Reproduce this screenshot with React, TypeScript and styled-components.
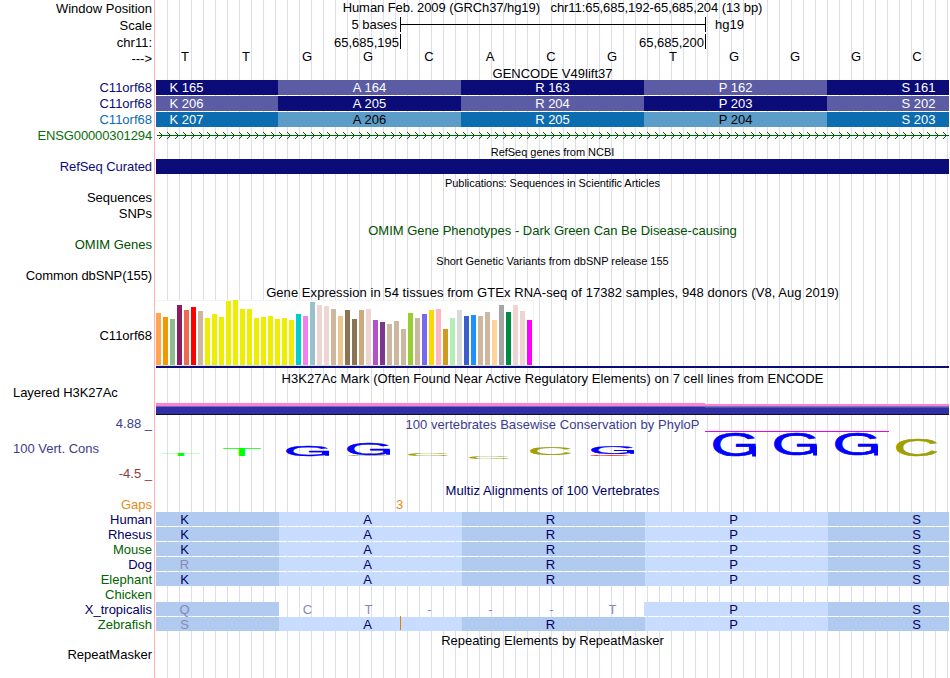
import React, { FunctionComponent, ReactNode } from "react";
import styled, { createGlobalStyle } from "styled-components";

const GlobalStyle = createGlobalStyle`
  body {
    margin: 0;
    background: #ffffff;
  }
`;

const Browser = styled.div`
  display: flex;
  flex-direction: column;
  width: 950px;
  height: 678px;
  overflow: hidden;
  font-family: "Liberation Sans", Arial, sans-serif;
  font-size: 13px;
  line-height: 15px;
  color: #000000;
  white-space: pre;
  background:
    linear-gradient(#ffb4b4, #ffb4b4) 154px 0 / 1px 100% no-repeat,
    repeating-linear-gradient(
        90deg,
        transparent 0 11px,
        #dcdcf8 11px 12px
      )
      156px 0 / 793px 100% no-repeat;
`;

const TrackRow = styled.div<{ $height: number }>`
  display: flex;
  flex: none;
  height: ${(props) => props.$height}px;
`;

const Side = styled.div`
  display: flex;
  flex-direction: column;
  flex: none;
  width: 156px;
`;

const Label = styled.div<{
  $top: number;
  $color?: string;
  $left?: boolean;
  $spacing?: number;
}>`
  padding: ${(props) => props.$top}px 4px 0 13px;
  text-align: ${(props) => (props.$left ? "left" : "right")};
  color: ${(props) => props.$color || "#000000"};
  letter-spacing: ${(props) => props.$spacing || 0}px;
`;

const Lane = styled.div`
  width: 793px;
  flex: none;
  overflow-x: clip;
  overflow-y: visible;
`;

const Title = styled.div<{
  $top: number;
  $color?: string;
  $small?: boolean;
  $spacing?: number;
}>`
  padding-top: ${(props) => props.$top}px;
  text-align: center;
  font-size: ${(props) => (props.$small ? 11 : 13)}px;
  color: ${(props) => props.$color || "#000000"};
  letter-spacing: ${(props) => props.$spacing || 0}px;
`;

const RulerLine = styled.div`
  display: flex;
`;

const RulerText = styled.div<{ $width: number; $gap?: number; $top?: number }>`
  box-sizing: border-box;
  width: ${(props) => props.$width}px;
  padding-top: ${(props) => props.$top || 0}px;
  padding-right: ${(props) => props.$gap || 0}px;
  text-align: right;
`;

const ScaleBar = styled.div`
  display: flex;
  align-items: center;
  width: 304px;
  height: 15px;
  border: solid #000000;
  border-width: 0 1px;

  &::before {
    content: "";
    width: 100%;
    height: 1px;
    background: #000000;
  }
`;

const ScaleName = styled.div`
  padding-left: 9px;
`;

const Tick = styled.div`
  width: 1px;
  height: 15px;
  background: #000000;
`;

const BaseRow = styled.div`
  display: grid;
  grid-template-columns: repeat(13, 61px);
  margin: -1px 0 0 -1.5px;
  width: 794px;
  text-align: center;
`;

// The first codon starts one base before the window
const CodonRow = styled.div`
  display: grid;
  grid-template-columns: repeat(5, 183px);
  margin-left: -61px;
  width: 915px;
`;

const Codon = styled.div<{ $fill: string; $color: string }>`
  height: 15px;
  text-align: center;
  background: ${(props) => props.$fill};
  color: ${(props) => props.$color};
`;

const SolidBar = styled.div`
  height: 15px;
  background: #0c0c78;
`;

const Expression = styled.div`
  display: flex;
  align-items: flex-end;
  gap: 2px;
  box-sizing: border-box;
  width: 378px;
  height: 66px;
  background: #ffffff;
  border: solid #f2f2f2;
  border-width: 1px 1px 1px 0;
  border-bottom-color: #dcdcdc;
`;

const Tissue = styled.div<{ $height: number; $color: string }>`
  width: 5px;
  height: ${(props) => props.$height}px;
  background: ${(props) => props.$color};
`;

const GeneModel = styled.div`
  height: 2px;
  background: #0c0c78;
`;

const SignalRow = styled.div`
  display: flex;
  padding-top: 18px;
`;

const Signal = styled.div<{ $width: number; $low?: boolean }>`
  width: ${(props) => props.$width}px;
  height: 12px;
  background: ${(props) =>
    props.$low
      ? "linear-gradient(transparent 0 1px, #ff82d2 1px 3px, #8070c8 3px 4px, #4858a8 4px 5px, #3030a4 5px 11px, #140a28 11px)"
      : "linear-gradient(#ff82d2 0 3px, #7864c8 3px 4px, #3030a4 4px 11px, #140a28 11px)"};
`;

const LogoChart = styled.svg`
  display: block;
  margin-top: -12px;
  font-family: "Liberation Sans", Arial, sans-serif;
  font-size: 100px;
`;

const AlignRow = styled.div`
  display: flex;
  height: 15px;
`;

const AlignCell = styled.div<{
  $width: number;
  $pad: number;
  $fill?: string;
  $faint?: boolean;
}>`
  box-sizing: border-box;
  flex: none;
  width: ${(props) => props.$width}px;
  height: 14px;
  padding-left: ${(props) => props.$pad}px;
  background: ${(props) => props.$fill || "transparent"};
  color: ${(props) => (props.$faint ? "#8787b9" : "#000064")};
`;

const Glyph = styled.span<{ $color?: string }>`
  display: inline-block;
  width: 21px;
  text-align: center;
  color: ${(props) => props.$color || "inherit"};
`;

const InsertMark = styled.span`
  display: inline-block;
  width: 1px;
  height: 14px;
  margin: -1px 0 0 22px;
  vertical-align: top;
  background: #e08000;
`;

const NAVY = "#0c0c78";
const SLATE = "#5c5ca4";
const BLUE = "#0c6cb0";
const SKY = "#5c9cc8";
const GREEN = "#006400";
const ORANGE = "#e68c14";

const genes = [
  {
    color: NAVY,
    fills: [NAVY, SLATE],
    text: ["#ffffff", "#ffffff"],
    codons: ["K 165", "A 164", "R 163", "P 162", "S 161"],
  },
  {
    color: NAVY,
    fills: [SLATE, NAVY],
    text: ["#ffffff", "#ffffff"],
    codons: ["K 206", "A 205", "R 204", "P 203", "S 202"],
  },
  {
    color: BLUE,
    fills: [BLUE, SKY],
    text: ["#ffffff", "#000000"],
    codons: ["K 207", "A 206", "R 205", "P 204", "S 203"],
  },
];

const tissues: [number, string][] = [
  [52, "#ffa54f"],
  [48, "#ee9a00"],
  [46, "#8fbc8f"],
  [60, "#8b1c62"],
  [55, "#ee6a50"],
  [58, "#ff0000"],
  [54, "#cdb79e"],
  [47, "#eeee00"],
  [51, "#eeee00"],
  [48, "#eeee00"],
  [64, "#eeee00"],
  [65, "#eeee00"],
  [56, "#eeee00"],
  [56, "#eeee00"],
  [47, "#eeee00"],
  [48, "#eeee00"],
  [49, "#eeee00"],
  [46, "#eeee00"],
  [47, "#eeee00"],
  [45, "#eeee00"],
  [51, "#00cdcd"],
  [49, "#ee82ee"],
  [63, "#9ac0cd"],
  [60, "#eed5d2"],
  [59, "#eed5d2"],
  [56, "#cdb79e"],
  [49, "#eec591"],
  [55, "#8b7355"],
  [46, "#8b7355"],
  [55, "#cdaa7d"],
  [56, "#eed5d2"],
  [45, "#b452cd"],
  [43, "#7a378b"],
  [41, "#cdb79e"],
  [44, "#cdb79e"],
  [36, "#cdb79e"],
  [52, "#9acd32"],
  [47, "#cdb79e"],
  [51, "#7a67ee"],
  [55, "#ffd700"],
  [56, "#ffb6c1"],
  [36, "#cd9b1d"],
  [47, "#b4eeb4"],
  [55, "#d9d9d9"],
  [49, "#3a5fcd"],
  [50, "#1e90ff"],
  [49, "#cdb79e"],
  [53, "#cdb79e"],
  [45, "#ffd39b"],
  [60, "#a6a6a6"],
  [53, "#008b45"],
  [60, "#eed5d2"],
  [54, "#eed5d2"],
  [45, "#ff00ff"],
];

// Ink box of each capital in a 100 unit font: left, right, above, below
const inkBoxes: Record<string, [number, number, number, number]> = {
  G: [4, 72, 71, 2],
  C: [4, 69, 71, 2],
  T: [2.1, 59, 68.8, 0],
};

const logo: [string, number, number, number, number, string][] = [
  ["T", 6, 34, 38, 2.4, "#00ff00"],
  ["T", 67, 29, 38, 7, "#00ff00"],
  ["G", 130, 25, 43, 11, "#0000ff"],
  ["G", 191, 23, 43, 12, "#0000ff"],
  ["C", 192, 35, 40, 1, "#a0a000"],
  ["C", 252, 33, 40, 3, "#a0a000"],
  ["C", 313, 37, 40, 2, "#a0a000"],
  ["C", 374, 27, 41, 8, "#a0a000"],
  ["G", 435, 26, 43, 8, "#0000ff"],
  ["C", 434, 34.5, 40, 1.5, "#ff0000"],
  ["G", 557, 13, 43, 24, "#0000ff"],
  ["G", 618, 13, 43, 23, "#0000ff"],
  ["G", 679, 13, 43, 23, "#0000ff"],
  ["C", 740, 18, 41, 18, "#a0a000"],
];

const species = [
  { name: "Human", color: "#000064", first: "K" },
  { name: "Rhesus", color: "#000064", first: "K" },
  { name: "Mouse", color: GREEN, first: "K" },
  { name: "Dog", color: "#000064", first: "R", faint: true },
  { name: "Elephant", color: GREEN, first: "K" },
];

const DARK_CELL = "#b0caf0";
const LIGHT_CELL = "#c8dcff";

interface TrackProps {
  height: number;
  label?: string;
  top?: number;
  color?: string;
  left?: boolean;
  spacing?: number;
  children?: ReactNode;
}

const Track: FunctionComponent<TrackProps> = (props) => {
  const { height, label, top = 0, color, left, spacing, children } = props;

  return (
    <TrackRow $height={height}>
      <Side>
        {label && (
          <Label $top={top} $color={color} $left={left} $spacing={spacing}>
            {label}
          </Label>
        )}
      </Side>
      <Lane>{children}</Lane>
    </TrackRow>
  );
};

const Strand = () => (
  <svg width="793" height="16" shapeRendering="crispEdges" fill={GREEN}>
    <rect x="1" y="7" width="792" height="1" />
    {Array.from({ length: 99 }, (_, i) => (
      <path
        key={i}
        d={[0, 1, 2, 3, 2, 1, 0]
          .map((dx, row) => `M${3 + i * 8 + dx} ${4 + row}h1v1h-1z`)
          .join("")}
      />
    ))}
  </svg>
);

const Logo = () => (
  <LogoChart width="793" height="50">
    <rect x="549" y="11" width="184" height="1" fill="#f000f0" />
    {logo.map(([base, x, y, w, h, fill]) => {
      const [x0, x1, up, down] = inkBoxes[base];
      const sx = w / (x1 - x0);
      const sy = h / (up + down);
      return (
        <g key={`${base}${x}`} fill={fill}>
          <text
            stroke={fill}
            strokeWidth={base === "T" ? 0 : 2}
            transform={`translate(${x - x0 * sx} ${y + up * sy}) scale(${sx} ${sy})`}
          >
            {base}
          </text>
          {base === "G" && (
            <rect
              x={x + w * 0.91}
              y={y + h * 0.55}
              width={w * 0.09}
              height={h * 0.43}
            />
          )}
        </g>
      );
    })}
  </LogoChart>
);

interface AlignmentProps {
  first: string;
  faint?: boolean;
  insert?: boolean;
}

const Alignment: FunctionComponent<AlignmentProps> = (props) => (
  <AlignRow>
    <AlignCell $width={123} $pad={18} $fill={DARK_CELL} $faint={props.faint}>
      <Glyph>{props.first}</Glyph>
    </AlignCell>
    <AlignCell $width={183} $pad={78} $fill={LIGHT_CELL}>
      <Glyph>A</Glyph>
      {props.insert && <InsertMark />}
    </AlignCell>
    <AlignCell $width={183} $pad={78} $fill={DARK_CELL}>
      <Glyph>R</Glyph>
    </AlignCell>
    <AlignCell $width={183} $pad={78} $fill={LIGHT_CELL}>
      <Glyph>P</Glyph>
    </AlignCell>
    <AlignCell $width={121} $pad={78} $fill={DARK_CELL}>
      <Glyph>S</Glyph>
    </AlignCell>
  </AlignRow>
);

const App = () => (
  <>
    <GlobalStyle />
    <Browser>
      <Track height={17} label="Window Position" top={1}>
        <Title $top={0} $spacing={-0.075}>
          {"Human Feb. 2009 (GRCh37/hg19)   chr11:65,685,192-65,685,204 (13 bp)"}
        </Title>
      </Track>
      <Track height={17} label="Scale" top={1}>
        <RulerLine>
          <RulerText $width={244} $gap={3}>
            5 bases
          </RulerText>
          <ScaleBar />
          <ScaleName>hg19</ScaleName>
        </RulerLine>
      </Track>
      <Track height={16} label="chr11:" top={1}>
        <RulerLine>
          <RulerText $width={244} $gap={1} $top={1}>
            65,685,195
          </RulerText>
          <Tick />
          <RulerText $width={304} $gap={1} $top={1}>
            65,685,200
          </RulerText>
          <Tick />
        </RulerLine>
      </Track>
      <Track height={16} label="--->" top={1}>
        <BaseRow>
          {[..."TTGGCACGTGGGC"].map((base, i) => (
            <span key={i}>{base}</span>
          ))}
        </BaseRow>
      </Track>
      <Track height={14}>
        <Title $top={0}>GENCODE V49lift37</Title>
      </Track>
      {genes.map((gene) => (
        <Track
          key={gene.codons[0]}
          height={16}
          label="C11orf68"
          color={gene.color}
        >
          <CodonRow>
            {gene.codons.map((codon, i) => (
              <Codon
                key={codon}
                $fill={gene.fills[i % 2]}
                $color={gene.text[i % 2]}
              >
                {codon}
              </Codon>
            ))}
          </CodonRow>
        </Track>
      ))}
      <Track
        height={16}
        label="ENSG00000301294"
        color="#0a6e0a"
        spacing={-0.12}
      >
        <Strand />
      </Track>
      <Track height={15}>
        <Title $top={1} $small $spacing={-0.03}>
          RefSeq genes from NCBI
        </Title>
      </Track>
      <Track height={16} label="RefSeq Curated" color={NAVY} spacing={-0.07}>
        <SolidBar />
      </Track>
      <Track height={15}>
        <Title $top={1} $small $spacing={-0.06}>
          Publications: Sequences in Scientific Articles
        </Title>
      </Track>
      <Track height={16} label="Sequences" />
      <Track height={16} label="SNPs" />
      <Track height={15}>
        <Title $top={1} $color="#005000">
          OMIM Gene Phenotypes - Dark Green Can Be Disease-causing
        </Title>
      </Track>
      <Track height={16} label="OMIM Genes" color="#005000" />
      <Track height={15}>
        <Title $top={1} $small $spacing={-0.02}>
          Short Genetic Variants from dbSNP release 155
        </Title>
      </Track>
      <Track height={16} label="Common dbSNP(155)" spacing={-0.1} />
      <Track height={16}>
        <Title $top={1} $spacing={0.06}>
          Gene Expression in 54 tissues from GTEx RNA-seq of 17382 samples, 948
          donors (V8, Aug 2019)
        </Title>
      </Track>
      <Track height={71} label="C11orf68" top={28}>
        <Expression>
          {tissues.map(([height, color], i) => (
            <Tissue key={i} $height={height} $color={color} />
          ))}
        </Expression>
        <GeneModel />
      </Track>
      <Track height={14}>
        <Title $top={0} $spacing={0.05}>
          H3K27Ac Mark (Often Found Near Active Regulatory Elements) on 7 cell
          lines from ENCODE
        </Title>
      </Track>
      <Track height={31} label="Layered H3K27Ac" left spacing={-0.05}>
        <SignalRow>
          <Signal $width={549} />
          <Signal $width={244} $low />
        </SignalRow>
      </Track>
      <TrackRow $height={67}>
        <Side>
          <Label $top={0} $color="#3c3c8c">
            4.88 _
          </Label>
          <Label $top={10} $color="#3c3c8c" $left>
            100 Vert. Cons
          </Label>
          <Label $top={10} $color="#8c3c3c">
            -4.5 _
          </Label>
        </Side>
        <Lane>
          <Title $top={1} $color="#3c3c8c" $spacing={0.04}>
            100 vertebrates Basewise Conservation by PhyloP
          </Title>
          <Logo />
        </Lane>
      </TrackRow>
      <Track height={14}>
        <Title $top={0} $color="#000064" $spacing={0.08}>
          Multiz Alignments of 100 Vertebrates
        </Title>
      </Track>
      <Track height={15} label="Gaps" color={ORANGE}>
        <AlignCell $width={400} $pad={233}>
          <Glyph $color={ORANGE}>3</Glyph>
        </AlignCell>
      </Track>
      {species.map((item) => (
        <Track
          key={item.name}
          height={15}
          label={item.name}
          color={item.color}
        >
          <Alignment first={item.first} faint={item.faint} />
        </Track>
      ))}
      <Track height={15} label="Chicken" color={GREEN} />
      <Track height={15} label="X_tropicalis" color="#000064">
        <AlignRow>
          <AlignCell $width={123} $pad={18} $fill={DARK_CELL} $faint>
            <Glyph>Q</Glyph>
          </AlignCell>
          {[..."CT---T"].map((base, i) => (
            <AlignCell key={i} $width={i === 5 ? 60 : 61} $pad={18} $faint>
              <Glyph>{base}</Glyph>
            </AlignCell>
          ))}
          <AlignCell $width={184} $pad={79} $fill={LIGHT_CELL}>
            <Glyph>P</Glyph>
          </AlignCell>
          <AlignCell $width={121} $pad={78} $fill={DARK_CELL}>
            <Glyph>S</Glyph>
          </AlignCell>
        </AlignRow>
      </Track>
      <Track height={15} label="Zebrafish" color={GREEN}>
        <Alignment first="S" faint insert />
      </Track>
      <Track height={15}>
        <Title $top={1}>Repeating Elements by RepeatMasker</Title>
      </Track>
      <Track height={30} label="RepeatMasker" />
    </Browser>
  </>
);

export default App;
